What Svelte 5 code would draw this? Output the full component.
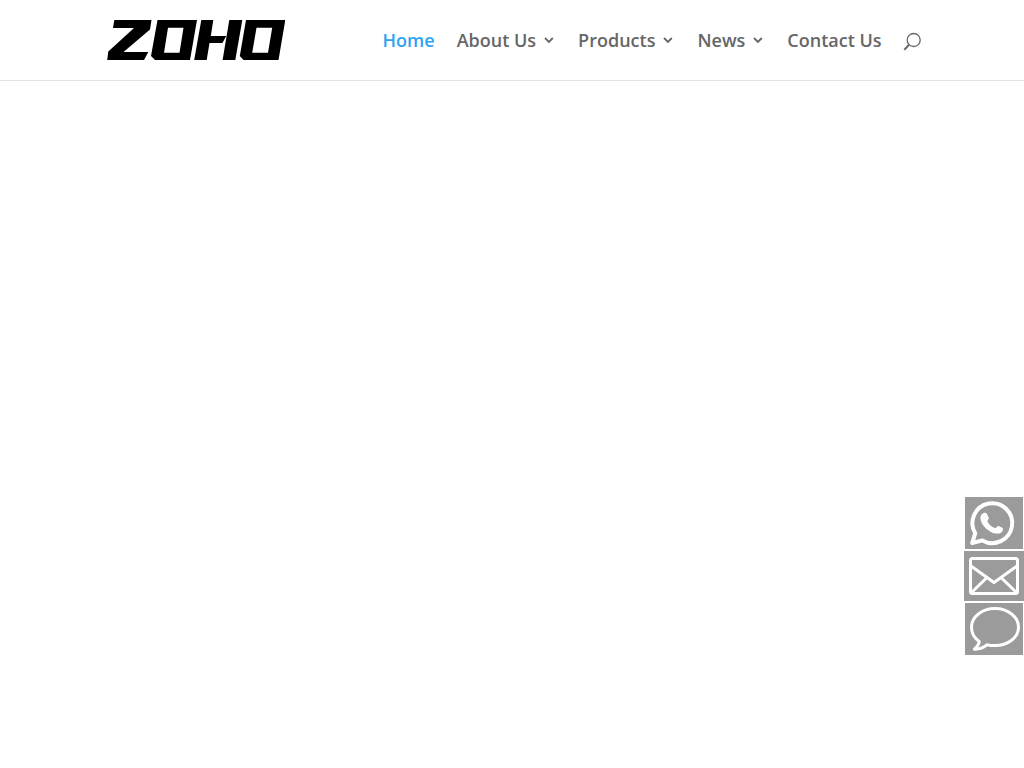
<script lang="ts">
    const links = [
        { label: 'Home', href: '#home', active: true },
        { label: 'About Us', href: '#about', menu: true },
        { label: 'Products', href: '#products', menu: true },
        { label: 'News', href: '#news', menu: true },
        { label: 'Contact Us', href: '#contact' },
    ]
</script>

<header>
    <div class="container">
        <a class="logo" href="#home" aria-label="ZOHO">
            <svg width="178" height="40" viewBox="0 0 178 40" fill-rule="evenodd">
                <path d="M7.3 0H44.5L43 9.5 16.5 32H41.3L37 40H.2L1.3 31.5 27 8H6z" />
                <path d="M50.5 0H90L83 40H48L44 36zM61 7.7L57 32.7H72.5L76.5 7.7z" />
                <path d="M94.3 0H106.3L103.8 16H119.3L115.4 23H102.5L99.7 40H87.2z" />
                <path d="M122.3 0H135.3L128.3 40H115.6z" />
                <path d="M139 0H178.3L171.5 40H136.5L132.8 36zM149.5 7.7L145.2 32.7H161L165.2 7.7z" />
            </svg>
        </a>

        <nav>
            {#each links as link}
                <a class="nav-link" class:active={link.active} href={link.href}>
                    {link.label}
                    {#if link.menu}
                        <svg class="chevron" width="12" height="8" viewBox="0 0 12 8">
                            <path d="M1 2l3.9 4L8.8 2" />
                        </svg>
                    {/if}
                </a>
            {/each}
            <button class="search" aria-label="Search">
                <svg width="18" height="19" viewBox="0 0 18 19">
                    <circle cx="9.7" cy="8" r="6.5" />
                    <path class="handle" d="M5.2 12.6L.3 17.7" />
                </svg>
            </button>
        </nav>
    </div>
</header>

<aside>
    <a class="contact" href="#whatsapp" aria-label="WhatsApp">
        <svg width="58" height="52" viewBox="0 0 58 52">
            <path class="line" d="M7.2 46L10.2 36.3A19.9 19.9 0 1 1 17.4 43.4z" />
            <path
                class="solid"
                d="M17.6 16.5C20 15.2 21.6 16 22.2 17.4L23.7 20.6C24.3 22 22.6 23.4 22.3 24.3C23.7 27.6 26.7 30 30.1 31.3C31.3 31 32.3 28.9 33.8 29L37.6 31C38.7 31.8 37.7 34.4 36.3 35.4C33.5 37.4 29.4 36.8 25.1 34.4C20.7 31.8 17 27.8 15.8 23.5C15 20.4 15.6 17.7 17.6 16.5z"
            />
        </svg>
    </a>
    <a class="contact" href="#email" aria-label="Email">
        <svg width="60" height="50" viewBox="0 0 60 50">
            <rect class="line thin" x="6.5" y="7.5" width="47" height="35" rx="2" />
            <path class="line thin" d="M7 15L30 31.5 53 15M7.5 41.5L22.5 27M52.5 41.5L37.5 27" />
        </svg>
    </a>
    <a class="contact" href="#message" aria-label="Message">
        <svg width="58" height="52" viewBox="0 0 58 52">
            <path
                class="line thin"
                d="M30 5.6C17 5.6 6.5 13.8 6.5 24.2C6.5 30.2 9.8 35.3 14.3 38.4C13.8 41.5 11.8 44 9.4 46.2C14.5 46.4 18.8 44.6 22.2 41.7C24.7 42.4 27.3 42.6 30 42.6C43 42.6 53.5 34.5 53.5 24.2S43 5.6 30 5.6z"
            />
        </svg>
    </a>
</aside>

<style>
    :global(body) {
        margin: 0;
        background: #fff;
        font-family: 'Open Sans', Arial, sans-serif;
    }

    header {
        border-bottom: 1px solid #e2e2e2;
    }

    .container {
        display: flex;
        align-items: center;
        justify-content: space-between;
        width: 80%;
        height: 80px;
        margin: 0 auto;
    }

    .logo {
        display: flex;
        padding-left: 5px;
    }

    nav {
        display: flex;
        align-items: center;
        gap: 22px;
    }

    .nav-link {
        display: flex;
        align-items: center;
        gap: 8px;
        color: #666;
        font-size: 18px;
        font-weight: 600;
        line-height: 24px;
        text-decoration: none;
        white-space: nowrap;
    }

    .nav-link.active {
        color: #2ea3f2;
    }

    .chevron {
        fill: none;
        stroke: #666;
        stroke-width: 1.8;
    }

    .search {
        display: flex;
        padding: 2px 0 0;
        border: 0;
        background: none;
        cursor: pointer;
    }

    .search svg {
        overflow: visible;
        fill: none;
        stroke: #666;
        stroke-width: 1.3;
    }

    .search .handle {
        stroke-width: 2;
    }

    aside {
        position: fixed;
        right: 0;
        bottom: 113px;
        display: flex;
        flex-direction: column;
        align-items: center;
        gap: 2px;
    }

    .contact {
        display: flex;
        background: #9b9b9b;
    }

    .line {
        fill: none;
        stroke: #fff;
        stroke-width: 4;
        stroke-linejoin: round;
    }

    .thin {
        stroke-width: 3;
    }

    .solid {
        fill: #fff;
    }
</style>
